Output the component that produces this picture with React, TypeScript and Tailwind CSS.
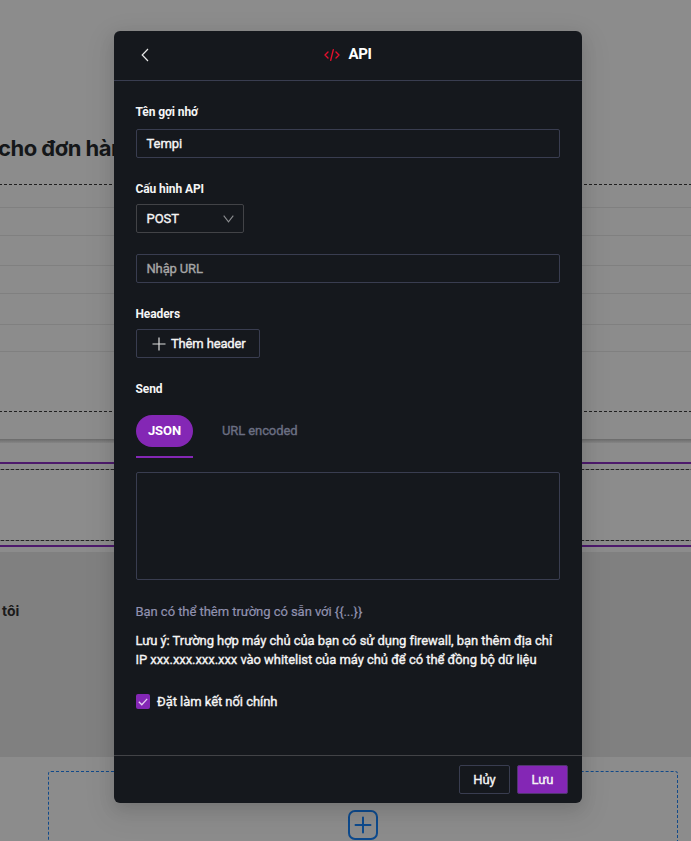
import React from "react";

const field = "w-[424px] rounded-[2px] border border-[#393d50] text-[13px]";

function Dashes({ alt = false }: { alt?: boolean }) {
  return (
    <div
      className={
        alt
          ? "h-px shrink-0 bg-[repeating-linear-gradient(90deg,#626262_0_1px,#252525_1px_4px,#747474_4px_5px)]"
          : "h-px shrink-0 bg-[repeating-linear-gradient(90deg,#202020_0_2px,transparent_2px_4px,#202020_4px_5px)]"
      }
    />
  );
}

function Backdrop() {
  return (
    <div className="flex h-full flex-col">
      <div className="h-[184px] shrink-0 pt-[132px]">
        <div className="-ml-[2px] whitespace-nowrap font-['Inter',sans-serif] text-[22px] leading-[32px] font-bold tracking-[-0.5px] text-[#151719]">
          cho đơn hàng
        </div>
      </div>
      <Dashes />
      <div className="h-[22px] shrink-0" />
      <div className="h-px shrink-0 bg-[#808080]" />
      <div className="h-[28px] shrink-0 border-b border-[#808080]" />
      <div className="h-[30px] shrink-0 border-b border-[#808080]" />
      <div className="h-[28px] shrink-0 border-b border-[#808080]" />
      <div className="h-[31px] shrink-0 border-b border-[#808080]" />
      <div className="h-[27px] shrink-0 border-b border-[#808080]" />
      <div className="h-[59px] shrink-0" />
      <Dashes />
      <div className="h-[27px] shrink-0" />
      <div className="h-1 shrink-0 bg-linear-to-b from-[#6b6b6b] to-[#858585]" />
      <div className="h-[19px] shrink-0" />
      <div className="flex h-[85px] shrink-0 flex-col border-y-2 border-[#4d1a6c]">
        <div className="h-[5px] shrink-0" />
        <Dashes alt />
        <div className="h-[70px] shrink-0" />
        <Dashes alt />
      </div>
      <div className="h-[5px] shrink-0" />
      <div className="h-[205px] shrink-0 bg-[#808080] pt-[49px] pl-0.5 font-['Inter',sans-serif] text-[14px] leading-5 font-bold text-[#1b1b1b]">
        tôi
      </div>
      <div className="mt-[14px] ml-[48px] flex h-[110px] w-[630px] shrink-0 justify-center rounded-[3px] border border-dashed border-[#10498a] pt-[38px]">
        <svg width="30" height="30" viewBox="0 0 30 30" fill="none" stroke="#0d4a8d" strokeWidth="2">
          <rect x="1" y="1" width="28" height="28" rx="6" />
          <path d="M15 7.5v15M7.5 15h15" strokeLinecap="round" />
        </svg>
      </div>
    </div>
  );
}

function Label({ children }: { children: React.ReactNode }) {
  return <div className="-ml-[0.5px] h-5 text-[12px] leading-5 font-bold tracking-[-0.1px] [-webkit-text-stroke:0px]">{children}</div>;
}

export default function App() {
  return (
    <div className="relative h-[841px] w-[691px] overflow-hidden bg-[#8c8c8c]">
      <Backdrop />
      <div className="absolute top-[31px] left-[114px] flex h-[772px] w-[468px] flex-col rounded-[6px] bg-[#15181d] font-['Roboto',sans-serif] text-[13px] font-normal tracking-[-0.05px] text-[#f5f5f5] shadow-[0_6px_16px_rgba(0,0,0,0.12),0_9px_28px_8px_rgba(0,0,0,0.05)] [-webkit-text-stroke:0.35px]">
        <header className="grid h-[50px] grid-cols-[1fr_auto_1fr] items-center border-b border-[#393d50] px-[22px] pb-[3px]">
          <svg className="mt-px ml-[4px]" width="10" height="14" viewBox="0 0 10 14" fill="none" stroke="#e8e8e8" strokeWidth="1.2">
            <path d="M8 1 2.2 7 8 13" />
          </svg>
          <div className="flex items-center gap-2">
            <svg className="mt-[2px]" width="16" height="14" viewBox="0 0 16 14" fill="none" stroke="#e5102c" strokeWidth="1.4" strokeLinecap="round" strokeLinejoin="round">
              <path d="M4 4 1 7l3 3M12 4l3 3-3 3M9.3 1.7 6.7 12.3" />
            </svg>
            <span className="text-[15px] leading-5 font-bold tracking-[-0.3px] text-white [-webkit-text-stroke:0px]">API</span>
          </div>
        </header>

        <main className="flex flex-1 flex-col items-start px-[22px] pt-[21px]">
          <Label>Tên gợi nhớ</Label>
          <div className={`${field} mt-[7px] h-[29px] pl-[9.5px] leading-[27px]`}>Tempi</div>

          <div className="mt-[21px]"><Label>Cấu hình API</Label></div>
          <div className="mt-[5px] flex h-[29px] w-[108px] items-center justify-between rounded-[2px] border border-[#424347] pr-[9px] pl-[9.5px]">
            <span>POST</span>
            <svg width="11" height="8" viewBox="0 0 11 8" fill="none" stroke="#8b8d90" strokeWidth="1.1">
              <path d="m.7.7 4.8 6.1L10.3.7" />
            </svg>
          </div>
          <div className={`${field} mt-[21px] h-[29px] pl-[9.5px] leading-[27px] tracking-[-0.15px] text-[#a6a6a6]`}>Nhập URL</div>

          <div className="mt-[21px]"><Label>Headers</Label></div>
          <button className="mt-[5px] flex h-[29px] w-[124px] items-center rounded-[2px] border border-[#393d50] pl-[15px]">
            <svg width="14" height="14" viewBox="0 0 14 14" fill="none" stroke="#dedede" strokeWidth="1.2">
              <path d="M7 .5v13M.5 7h13" />
            </svg>
            <span className="ml-[5px] tracking-[-0.15px]">Thêm header</span>
          </button>

          <div className="mt-[21px]"><Label>Send</Label></div>
          <div className="mt-[16px] flex h-[43px] items-start gap-[29px]">
            <div className="h-[43px] w-[57px] border-b-2 border-[#8427b5]">
              <div className="h-8 rounded-full bg-[#8427b5] text-center leading-[31px] font-bold text-white [-webkit-text-stroke:0px]">JSON</div>
            </div>
            <div className="leading-[31px] tracking-[-0.1px] text-[#6b6f83]">URL encoded</div>
          </div>
          <div className={`${field} mt-[14px] h-[108px]`} />

          <div className="mt-[22px] -ml-[0.5px] leading-[19px] text-[#9192b0] [-webkit-text-stroke:0.2px]">{"Bạn có thể thêm trường có sẵn với {{...}}"}</div>
          <div className="mt-[10px] -ml-[0.5px] leading-[19px] whitespace-nowrap">
            Lưu ý: Trường hợp máy chủ của bạn có sử dụng firewall, bạn thêm địa chỉ<br />
            IP xxx.xxx.xxx.xxx vào whitelist của máy chủ để có thể đồng bộ dữ liệu
          </div>
          <div className="mt-[23px] flex h-5 items-center">
            <span className="mb-px flex h-[15px] w-[14px] items-center justify-center rounded-[2px] bg-[#8427b5]">
              <svg width="10" height="8" viewBox="0 0 10 8" fill="none" stroke="#e4cff0" strokeWidth="1.3">
                <path d="m.8 3.8 3 3L9.2.9" />
              </svg>
            </span>
            <span className="ml-[7px]">Đặt làm kết nối chính</span>
          </div>
        </main>

        <footer className="flex h-[48px] justify-end gap-[7px] border-t border-[#424347] pt-[9px] pr-[14px]">
          <button className="h-[29px] w-[51px] rounded-[2px] border border-[#393d50]">Hủy</button>
          <button className="h-[29px] w-[51px] rounded-[2px] border border-[#50366f] bg-[#8427b5]">Lưu</button>
        </footer>
      </div>
    </div>
  );
}
